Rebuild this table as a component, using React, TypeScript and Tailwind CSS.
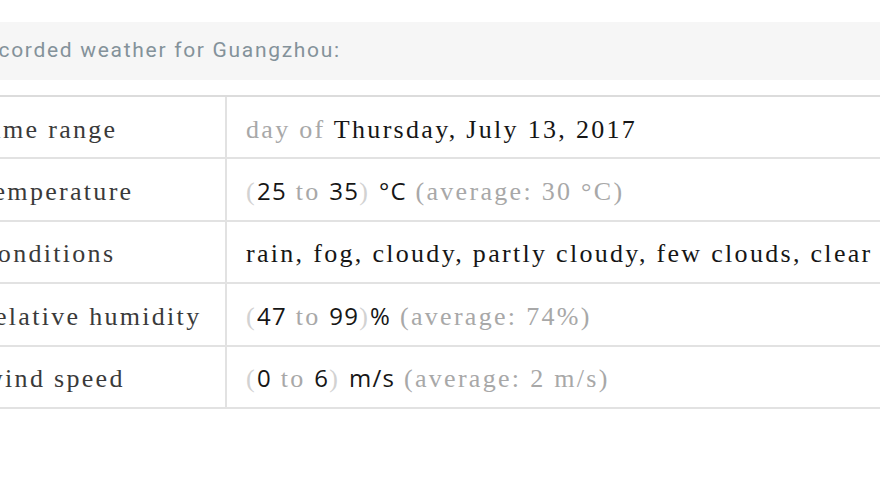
import type { FC, ReactNode } from 'react';

const Gray: FC<{ children: ReactNode }> = ({ children }) => (
  <span className="text-[#a8a8a8]">{children}</span>
);

const Paren: FC<{ children: ReactNode }> = ({ children }) => (
  <span className="text-[#d2d2d2]">{children}</span>
);

const Num: FC<{ children: ReactNode }> = ({ children }) => (
  <span className="font-['Open_Sans',sans-serif] text-[24px] tracking-[1.2px] text-[#161616]">{children}</span>
);

interface Row {
  label: string;
  value: ReactNode;
}

const rows: Row[] = [
  {
    label: 'time range',
    value: (
      <>
        <Gray>day of </Gray>
        <span className="text-[#161616]">Thursday, July 13, 2017</span>
      </>
    ),
  },
  {
    label: 'temperature',
    value: (
      <>
        <Paren>(</Paren>
        <Num>25</Num>
        <Gray> to </Gray>
        <Num>35</Num>
        <Paren>)</Paren> <Num>°C</Num> <Gray>(average: 30 °C)</Gray>
      </>
    ),
  },
  {
    label: 'conditions',
    value: <span className="text-[#161616]">rain, fog, cloudy, partly cloudy, few clouds, clear</span>,
  },
  {
    label: 'relative humidity',
    value: (
      <>
        <Paren>(</Paren>
        <Num>47</Num>
        <Gray> to </Gray>
        <Num>99</Num>
        <Paren>)</Paren>
        <Num>%</Num> <Gray>(average: 74%)</Gray>
      </>
    ),
  },
  {
    label: 'wind speed',
    value: (
      <>
        <Paren>(</Paren>
        <Num>0</Num>
        <Gray> to </Gray>
        <Num>6</Num>
        <Paren>)</Paren> <Num>m/s</Num> <Gray>(average: 2 m/s)</Gray>
      </>
    ),
  },
];

const App: FC = () => {
  return (
    <div className="w-[880px] h-[495px] overflow-hidden bg-white">
      <div className="-ml-[35px] w-[960px] pt-[22px]">
        <div className="h-[58px] bg-[#f6f6f6] flex items-center pl-[6px] font-['Roboto',sans-serif] text-[21px] tracking-[1.7px] text-[#84929a]">
          Recorded weather for Guangzhou:
        </div>
        <div className="mt-[15px] border-t-2 border-[#dcdcdc] font-['Liberation_Serif',serif] text-[26px] tracking-[2.3px] whitespace-nowrap">
          {rows.map((r) => (
            <div key={r.label} className="flex h-[62.4px] border-b-2 border-[#e2e2e2]">
              <div className="w-[262px] shrink-0 flex items-center pl-[19px] pt-[4px] border-r-2 border-[#e2e2e2] text-[#3a3a3a]">
                {r.label}
              </div>
              <div className="flex-1 flex items-center pl-[19px] pt-[4px]">
                <span>{r.value}</span>
              </div>
            </div>
          ))}
        </div>
      </div>
    </div>
  );
};

export default App;
